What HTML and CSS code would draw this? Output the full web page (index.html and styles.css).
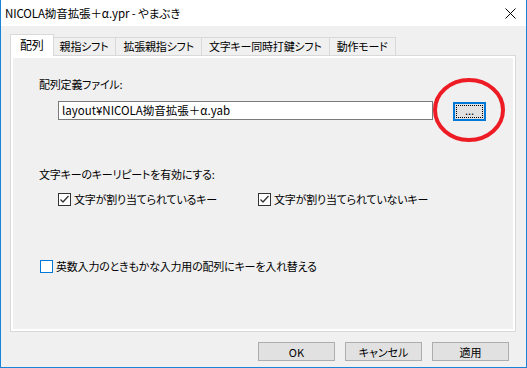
FILE: index.html
```html
<!DOCTYPE html>
<html lang="ja">
<head>
  <meta charset="UTF-8" />
  <title>NICOLA拗音拡張＋α.ypr - やまぶき</title>
  <link rel="stylesheet" href="styles.css">
</head>
<body>
  <div class="window">

    <!-- Title bar -->
    <div class="titlebar">
      <span class="title">NICOLA拗音拡張＋α.ypr - やまぶき</span>
      <svg class="close" width="11" height="11" viewBox="0 0 11 11">
        <path d="M0.5 0.5 L10.5 10.5 M10.5 0.5 L0.5 10.5" stroke="#000" stroke-width="1" fill="none"/>
      </svg>
    </div>

    <!-- Tabs -->
    <div class="tabs">
      <div class="tab selected">配列</div>
      <div class="tab">親指シフト</div>
      <div class="tab">拡張親指シフト</div>
      <div class="tab">文字キー同時打鍵シフト</div>
      <div class="tab">動作モード</div>
    </div>

    <!-- Tab page -->
    <div class="panel">
      <div class="label">配列定義ファイル:</div>
      <div class="file-row">
        <div class="textbox">layout¥NICOLA拗音拡張＋α.yab</div>
        <div class="browse-wrap">
          <button class="browse"><span class="focus">...</span></button>
          <svg class="mark" width="72" height="64" viewBox="0 0 72 64">
            <ellipse cx="36" cy="32" rx="34" ry="30" stroke="#ED1C24" stroke-width="4" fill="none"/>
          </svg>
        </div>
      </div>

      <div class="label group">文字キーのキーリピートを有効にする:</div>
      <div class="check-row">
        <div class="check wide">
          <svg width="13" height="13" viewBox="0 0 13 13">
            <rect x="0.5" y="0.5" width="12" height="12" fill="#fff" stroke="#333"/>
            <path d="M2.5 6.5 L5 9 L10.5 3" stroke="#333" stroke-width="1.3" fill="none"/>
          </svg>
          <span>文字が割り当てられているキー</span>
        </div>
        <div class="check">
          <svg width="13" height="13" viewBox="0 0 13 13">
            <rect x="0.5" y="0.5" width="12" height="12" fill="#fff" stroke="#333"/>
            <path d="M2.5 6.5 L5 9 L10.5 3" stroke="#333" stroke-width="1.3" fill="none"/>
          </svg>
          <span>文字が割り当てられていないキー</span>
        </div>
      </div>

      <div class="check swap">
        <svg width="13" height="13" viewBox="0 0 13 13">
          <rect x="0.5" y="0.5" width="12" height="12" fill="#fff" stroke="#0078D7"/>
        </svg>
        <span>英数入力のときもかな入力用の配列にキーを入れ替える</span>
      </div>
    </div>

    <!-- Dialog buttons -->
    <div class="footer">
      <button class="btn">OK</button>
      <button class="btn">キャンセル</button>
      <button class="btn">適用</button>
    </div>

  </div>
</body>
</html>
```

FILE: styles.css
```css
* {
  box-sizing: border-box;
}

body {
  margin: 0;
  padding: 0;
  font-family: "Noto Sans CJK JP", "Noto Sans", sans-serif;
  font-size: 11px;
  letter-spacing: -0.2px;
  font-feature-settings: "palt";
  color: #000;
}

.window {
  width: 527px;
  height: 368px;
  background: #F0F0F0;
  border: 1px solid #1883D7;
  border-top: none;
}

.titlebar {
  height: 26px;
  background: #fff;
  display: flex;
  align-items: center;
  justify-content: space-between;
  padding: 0 10px 1px 4px;
}

.title {
  font-size: 11.5px;
  line-height: 16px;
  letter-spacing: -0.1px;
}

.close {
  display: block;
  margin-top: 1px;
}

.tabs {
  display: flex;
  align-items: flex-end;
  height: 21px;
  margin: 8px 0 0 9px;
  position: relative;
  z-index: 1;
}

.tab {
  height: 18px;
  line-height: 16px;
  padding: 0 7px;
  border: 1px solid #D9D9D9;
  border-bottom: none;
  margin-left: -1px;
  background: #F0F0F0;
  white-space: nowrap;
}

.tab.selected {
  height: 22px;
  margin-bottom: -1px;
  margin-left: 0;
  margin-right: -1px;
  padding: 2px 9px 0 9px;
  background: #fff;
  font-size: 12px;
  position: relative;
  z-index: 2;
}

.panel {
  height: 277px;
  margin: 0 10px 0 9px;
  border: 1px solid #D9D9D9;
  box-shadow: inset 0 0 0 2px #fff;
  padding: 20px 0 0 28px;
}

.label {
  line-height: 16px;
}

.file-row {
  display: flex;
  align-items: flex-start;
  margin-top: 9px;
  padding-left: 19px;
}

.textbox {
  width: 375px;
  height: 19px;
  background: #fff;
  border: 1px solid #7A7A7A;
  padding: 0 3px;
  font-size: 11.5px;
  letter-spacing: 0;
  line-height: 17px;
  white-space: nowrap;
}

.browse-wrap {
  position: relative;
  margin-left: 20px;
  margin-top: 1px;
}

.browse {
  display: block;
  width: 33px;
  height: 19px;
  padding: 1px;
  background: #E1E1E1;
  border: 2px solid #0078D7;
  font: inherit;
  font-size: 11px;
}

.browse .focus {
  display: block;
  height: 100%;
  border: 1px dotted #000;
  line-height: 9px;
}

.mark {
  position: absolute;
  left: -20px;
  top: -24px;
}

.group {
  margin-top: 45px;
}

.check-row {
  display: flex;
  margin-top: 9px;
  padding-left: 19px;
}

.check {
  display: flex;
  align-items: center;
  gap: 3px;
  line-height: 16px;
}

.check svg {
  display: block;
}

.check.wide {
  width: 200px;
}

.swap {
  margin-top: 51px;
  padding-left: 1px;
}

.footer {
  display: flex;
  justify-content: flex-end;
  gap: 10px;
  margin-top: 10px;
  padding-right: 17px;
}

.btn {
  width: 77px;
  height: 19px;
  padding: 0;
  background: #E1E1E1;
  border: 1px solid #ADADAD;
  font: inherit;
  line-height: 16px;
  color: #000;
}
```
